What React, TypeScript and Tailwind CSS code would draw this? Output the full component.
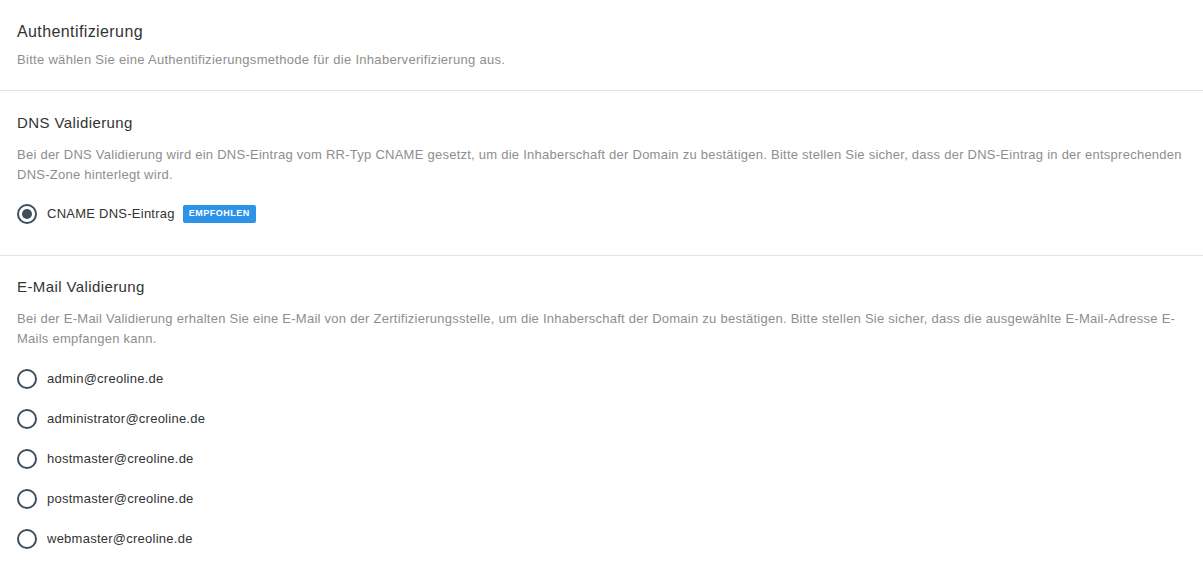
import React, { useState } from 'react'

const emails = [
  'admin@creoline.de',
  'administrator@creoline.de',
  'hostmaster@creoline.de',
  'postmaster@creoline.de',
  'webmaster@creoline.de',
]

function Radio({ checked }: { checked: boolean }) {
  return (
    <span className="flex h-5 w-5 shrink-0 items-center justify-center rounded-full border-2 border-[#3e4f5c]">
      {checked && <span className="h-[10px] w-[10px] rounded-full bg-[#3e4f5c]" />}
    </span>
  )
}

function Option({
  label,
  checked,
  onSelect,
  children,
}: {
  label: string
  checked: boolean
  onSelect: () => void
  children?: React.ReactNode
}) {
  return (
    <label className="flex h-5 cursor-pointer items-center" onClick={onSelect}>
      <Radio checked={checked} />
      <span className="ml-[10px] text-[13px] leading-5 tracking-[0.25px] text-[#333]">{label}</span>
      {children}
    </label>
  )
}

export default function App() {
  const [selected, setSelected] = useState('cname')

  return (
    <div className="min-h-screen bg-white font-['Liberation_Sans',Arial,sans-serif]">
      {/* Header */}
      <div className="border-b border-[#e2e2e2] px-[17px] pt-[22px] pb-5">
        <h1 className="text-base leading-5 tracking-[0.4px] text-[#333]">Authentifizierung</h1>
        <p className="mt-2 text-[13px] leading-5 tracking-[0.3px] text-[#8e8e8e]">
          Bitte wählen Sie eine Authentifizierungsmethode für die Inhaberverifizierung aus.
        </p>
      </div>

      {/* DNS */}
      <div className="border-b border-[#e2e2e2] px-[17px] pt-[22px] pb-[31px]">
        <h2 className="text-[15px] leading-5 tracking-[0.4px] text-[#333]">DNS Validierung</h2>
        <p className="mt-3 text-[13px] leading-5 tracking-[0.25px] text-[#8e8e8e]">
          Bei der DNS Validierung wird ein DNS-Eintrag vom RR-Typ CNAME gesetzt, um die Inhaberschaft der Domain zu
          bestätigen. Bitte stellen Sie sicher, dass der DNS-Eintrag in der entsprechenden DNS-Zone hinterlegt wird.
        </p>
        <div className="mt-[19px]">
          <Option label="CNAME DNS-Eintrag" checked={selected === 'cname'} onSelect={() => setSelected('cname')}>
            <span className="ml-[8px] flex h-[18px] items-center rounded-[2px] bg-[#2d93e8] px-[6px] text-[9px] font-bold tracking-[0.5px] text-white">
              EMPFOHLEN
            </span>
          </Option>
        </div>
      </div>

      {/* E-Mail */}
      <div className="px-[17px] pt-[21px] pb-6">
        <h2 className="text-[15px] leading-5 tracking-[0.4px] text-[#333]">E-Mail Validierung</h2>
        <p className="mt-3 text-[13px] leading-5 tracking-[0.25px] text-[#8e8e8e]">
          Bei der E-Mail Validierung erhalten Sie eine E-Mail von der Zertifizierungsstelle, um die Inhaberschaft der
          Domain zu bestätigen. Bitte stellen Sie sicher, dass die ausgewählte E-Mail-Adresse E-Mails empfangen kann.
        </p>
        <div className="mt-5 flex flex-col gap-5">
          {emails.map((email) => (
            <Option key={email} label={email} checked={selected === email} onSelect={() => setSelected(email)} />
          ))}
        </div>
      </div>
    </div>
  )
}
